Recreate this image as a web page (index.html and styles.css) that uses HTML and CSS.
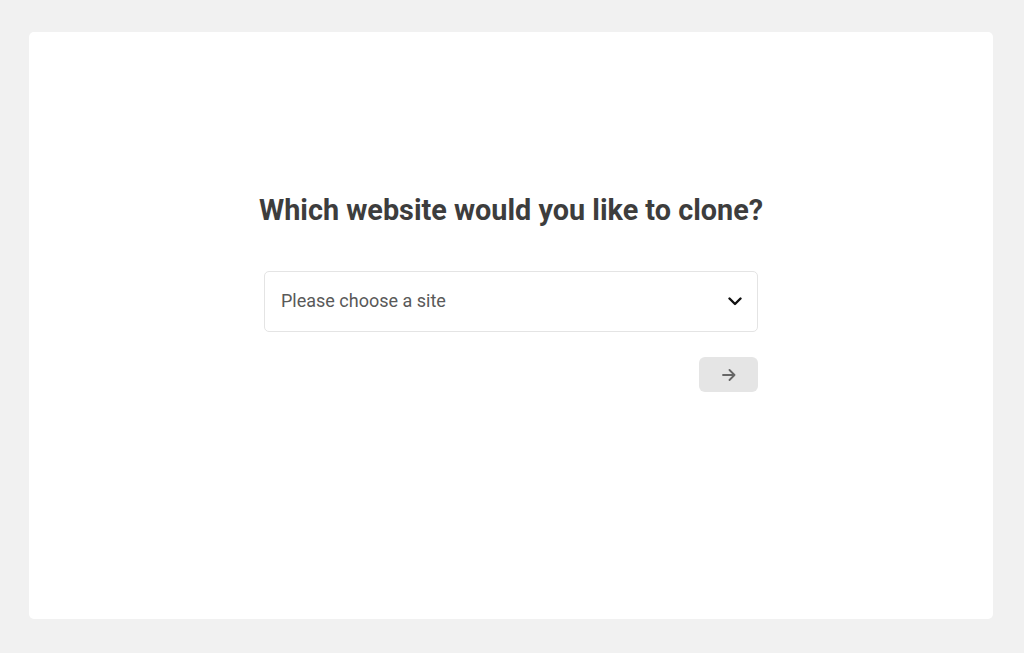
FILE: index.html
```html
<!DOCTYPE html>
<html lang="en">
<head>
<meta charset="utf-8">
<title>Clone a website</title>
<link rel="stylesheet" href="styles.css">
</head>
<body>
<main class="card">
  <section class="picker">
    <h1 class="title">Which website would you like to clone?</h1>
    <div class="select">
      <span class="placeholder">Please choose a site</span>
      <svg class="chevron" width="14" height="9" viewBox="0 0 14 9" aria-hidden="true"><path d="M1.5 1.5 L7 7 L12.5 1.5" fill="none" stroke="#111" stroke-width="2.4" stroke-linecap="round" stroke-linejoin="round"/></svg>
    </div>
    <div class="actions">
      <button class="next" type="button" aria-label="Next">
        <svg width="14" height="12" viewBox="0 0 14 12" aria-hidden="true"><path d="M1 6 H12.5 M7.5 1 L12.5 6 L7.5 11" fill="none" stroke="#666" stroke-width="1.8" stroke-linecap="round" stroke-linejoin="round"/></svg>
      </button>
    </div>
  </section>
</main>
</body>
</html>
```

FILE: styles.css
```css
html, body {
  margin: 0;
  padding: 0;
}
body {
  background: #f1f1f1;
  font-family: Roboto, "Liberation Sans", Arial, sans-serif;
  padding: 32px 31px 34px 29px;
  box-sizing: border-box;
  height: 653px;
}
.card {
  background: #ffffff;
  border-radius: 5px;
  height: 587px;
  display: flex;
  justify-content: center;
}
.picker {
  width: 494px;
  padding-top: 161px;
  display: flex;
  flex-direction: column;
  align-items: stretch;
}
.title {
  margin: 0 -20px;
  font-size: 28.8px;
  line-height: 34px;
  font-weight: 700;
  color: #3d3d3d;
  text-align: center;
  white-space: nowrap;
}
.select {
  margin-top: 44px;
  height: 61px;
  box-sizing: border-box;
  border: 1px solid #e4e4e4;
  border-radius: 5px;
  display: flex;
  align-items: center;
  justify-content: space-between;
  padding: 0 15px 2px 16px;
}
.placeholder {
  font-size: 18px;
  color: #595959;
}
.chevron {
  display: block;
  margin-top: 2px;
}
.actions {
  margin-top: 25px;
  display: flex;
  justify-content: flex-end;
}
.next {
  width: 59px;
  height: 35px;
  border: none;
  border-radius: 6px;
  background: #e5e5e5;
  display: flex;
  align-items: center;
  justify-content: center;
  padding: 0;
}
```
